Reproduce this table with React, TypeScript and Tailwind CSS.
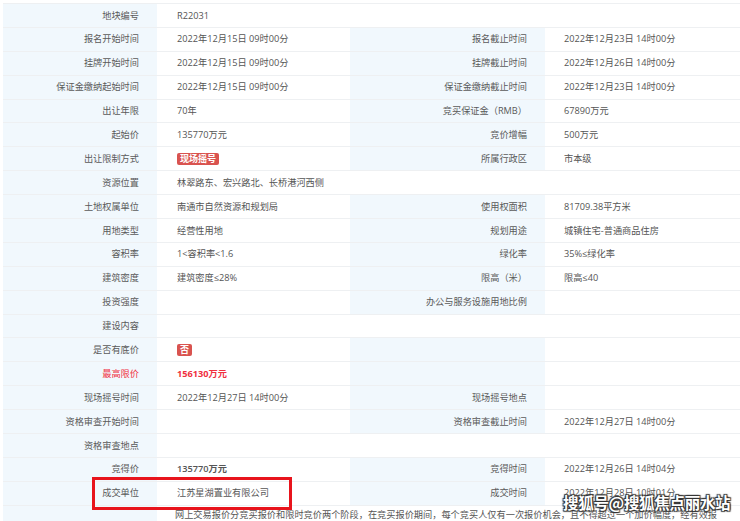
type Cell = React.ReactNode;

type Row = {
  l1: Cell;
  v1?: Cell;
  l2?: Cell;
  v2?: Cell;
  span?: boolean;
  tall?: boolean;
};

function Badge({ children }: { children: React.ReactNode }) {
  return (
    <span className="inline-flex h-[12px] items-center rounded-[2px] bg-[#d9534f] px-[3px] text-[9px] font-bold leading-none text-white">
      {children}
    </span>
  );
}

const rows: Row[] = [
  { l1: "地块编号", v1: "R22031", span: true },
  { l1: "报名开始时间", v1: "2022年12月15日 09时00分", l2: "报名截止时间", v2: "2022年12月23日 14时00分" },
  { l1: "挂牌开始时间", v1: "2022年12月15日 09时00分", l2: "挂牌截止时间", v2: "2022年12月26日 14时00分" },
  { l1: "保证金缴纳起始时间", v1: "2022年12月15日 09时00分", l2: "保证金缴纳截止时间", v2: "2022年12月23日 14时00分" },
  { l1: "出让年限", v1: "70年", l2: "竞买保证金（RMB）", v2: "67890万元" },
  { l1: "起始价", v1: "135770万元", l2: "竞价增幅", v2: "500万元" },
  { l1: "出让限制方式", v1: <Badge>现场摇号</Badge>, l2: "所属行政区", v2: "市本级" },
  { l1: "资源位置", v1: "林翠路东、宏兴路北、长桥港河西侧", span: true },
  { l1: "土地权属单位", v1: "南通市自然资源和规划局", l2: "使用权面积", v2: "81709.38平方米" },
  { l1: "用地类型", v1: "经营性用地", l2: "规划用途", v2: "城镇住宅-普通商品住房" },
  { l1: "容积率", v1: "1<容积率<1.6", l2: "绿化率", v2: "35%≤绿化率" },
  { l1: "建筑密度", v1: "建筑密度≤28%", l2: "限高（米）", v2: "限高≤40" },
  { l1: "投资强度", v1: "", l2: "办公与服务设施用地比例", v2: "" },
  { l1: "建设内容", v1: "", span: true },
  { l1: "是否有底价", v1: <Badge>否</Badge>, l2: "", v2: "" },
  {
    l1: <span className="text-[#f0303f]">最高限价</span>,
    v1: <span className="font-bold text-[#f0303f]">156130万元</span>,
    l2: "",
    v2: "",
  },
  { l1: "现场摇号时间", v1: "2022年12月27日 14时00分", l2: "现场摇号地点", v2: "" },
  { l1: "资格审查开始时间", v1: "", l2: "资格审查截止时间", v2: "2022年12月27日 14时00分" },
  { l1: "资格审查地点", v1: "", span: true },
  { l1: "竞得价", v1: <span className="font-semibold">135770万元</span>, l2: "竞得时间", v2: "2022年12月26日 14时04分" },
  { l1: "成交单位", v1: "江苏星湖置业有限公司", l2: "成交时间", v2: "2022年12月28日 10时01分" },
  {
    l1: "",
    v1: (
      <p className="w-[544px] leading-[16px]">
        网上交易报价分竞买报价和限时竞价两个阶段，在竞买报价期间，每个竞买人仅有一次报价机会，且不得超过一个加价幅度，经有效报价后进入限时竞价阶段。
      </p>
    ),
    span: true,
    tall: true,
  },
];

export default function App() {
  return (
    <div className="relative h-[521px] w-[740px] overflow-hidden bg-white pl-[3px] pt-[3px] font-['Open_Sans','Noto_Sans_CJK_SC',sans-serif] text-[9.2px] text-[#555]">
      <div className="w-[760px] border-t border-[#eef0f2]">
        {rows.map((r, i) => (
          <div
            key={i}
            className={`grid grid-cols-[154px_193px_195px_218px] border-b border-[#eef0f2] ${r.tall ? "h-[60px]" : "h-[23.9px]"}`}
          >
            <div
              className={`flex bg-[#f1f8fd] pr-[18px] text-[#5a5a5a] ${r.tall ? "items-start justify-end pt-[5px]" : "items-center justify-end"}`}
            >
              {r.l1}
            </div>
            {r.span ? (
              <div
                className={`col-span-3 flex ${r.tall ? "items-start pl-[18px] pt-[1px]" : "items-center pl-[20px]"}`}
              >
                {r.v1}
              </div>
            ) : (
              <>
                <div className="flex items-center pl-[20px]">{r.v1}</div>
                <div className="flex items-center justify-end bg-[#f1f8fd] pr-[18px] text-[#5a5a5a]">
                  {r.l2}
                </div>
                <div className="flex items-center pl-[19px]">{r.v2}</div>
              </>
            )}
          </div>
        ))}
      </div>

      <div className="absolute left-[92px] top-[477px] h-[33px] w-[200px] border-[3px] border-[#e8141c]" />

      <div className="absolute left-[563px] top-[495px] font-['Noto_Sans_CJK_SC',sans-serif] text-[15.5px] font-bold leading-none tracking-[-0.3px] text-white [text-shadow:0_0_1px_#333,1px_1px_1px_#333,-1px_-1px_1px_#333,1px_-1px_1px_#333,-1px_1px_1px_#333]">
        搜狐号@搜狐焦点丽水站
      </div>
    </div>
  );
}
